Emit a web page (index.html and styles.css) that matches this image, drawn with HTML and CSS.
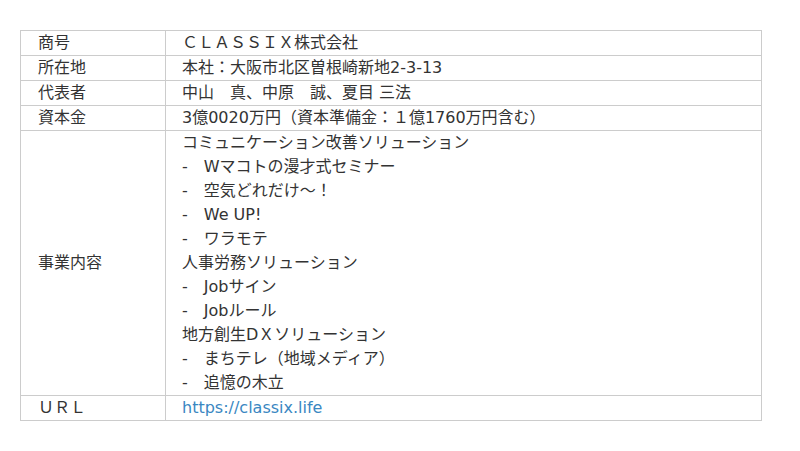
FILE: index.html
```html
<!DOCTYPE html>
<html lang="ja">
<head>
<meta charset="utf-8">
<link rel="stylesheet" href="styles.css">
</head>
<body>
<div class="wrap">
<table class="info">
<tr><th>商号</th><td>ＣＬＡＳＳＩＸ株式会社</td></tr>
<tr><th>所在地</th><td>本社：大阪市北区曽根崎新地2-3-13</td></tr>
<tr><th>代表者</th><td>中山　真、中原　誠、夏目 三法</td></tr>
<tr><th>資本金</th><td>3億0020万円（資本準備金：１億1760万円含む）</td></tr>
<tr><th>事業内容</th><td>コミュニケーション改善ソリューション<br>-　Wマコトの漫才式セミナー<br>-　空気どれだけ～！<br>-　We UP!<br>-　ワラモテ<br>人事労務ソリューション<br>-　Jobサイン<br>-　Jobルール<br>地方創生DＸソリューション<br>-　まちテレ（地域メディア）<br>-　追憶の木立</td></tr>
<tr><th>ＵＲＬ</th><td><a class="link" href="#">https://classix.life</a></td></tr>
</table>
</div>
</body>
</html>
```

FILE: styles.css
```css
html, body {
  margin: 0;
  padding: 0;
  background: #fff;
}
.wrap {
  padding: 30px 0 0 20px;
}
.info {
  border-collapse: collapse;
  width: 742px;
  font-family: "DejaVu Sans", "Noto Sans CJK JP", sans-serif;
  font-size: 16px;
  line-height: 24px;
  color: #333;
}
.info th, .info td {
  border: 1px solid #cccccc;
  padding: 0 16px;
  text-align: left;
  font-weight: normal;
  vertical-align: middle;
}
.info th {
  width: 111px;
  padding-left: 17px;
}
.link {
  color: #3a87c2;
  text-decoration: none;
}
```
